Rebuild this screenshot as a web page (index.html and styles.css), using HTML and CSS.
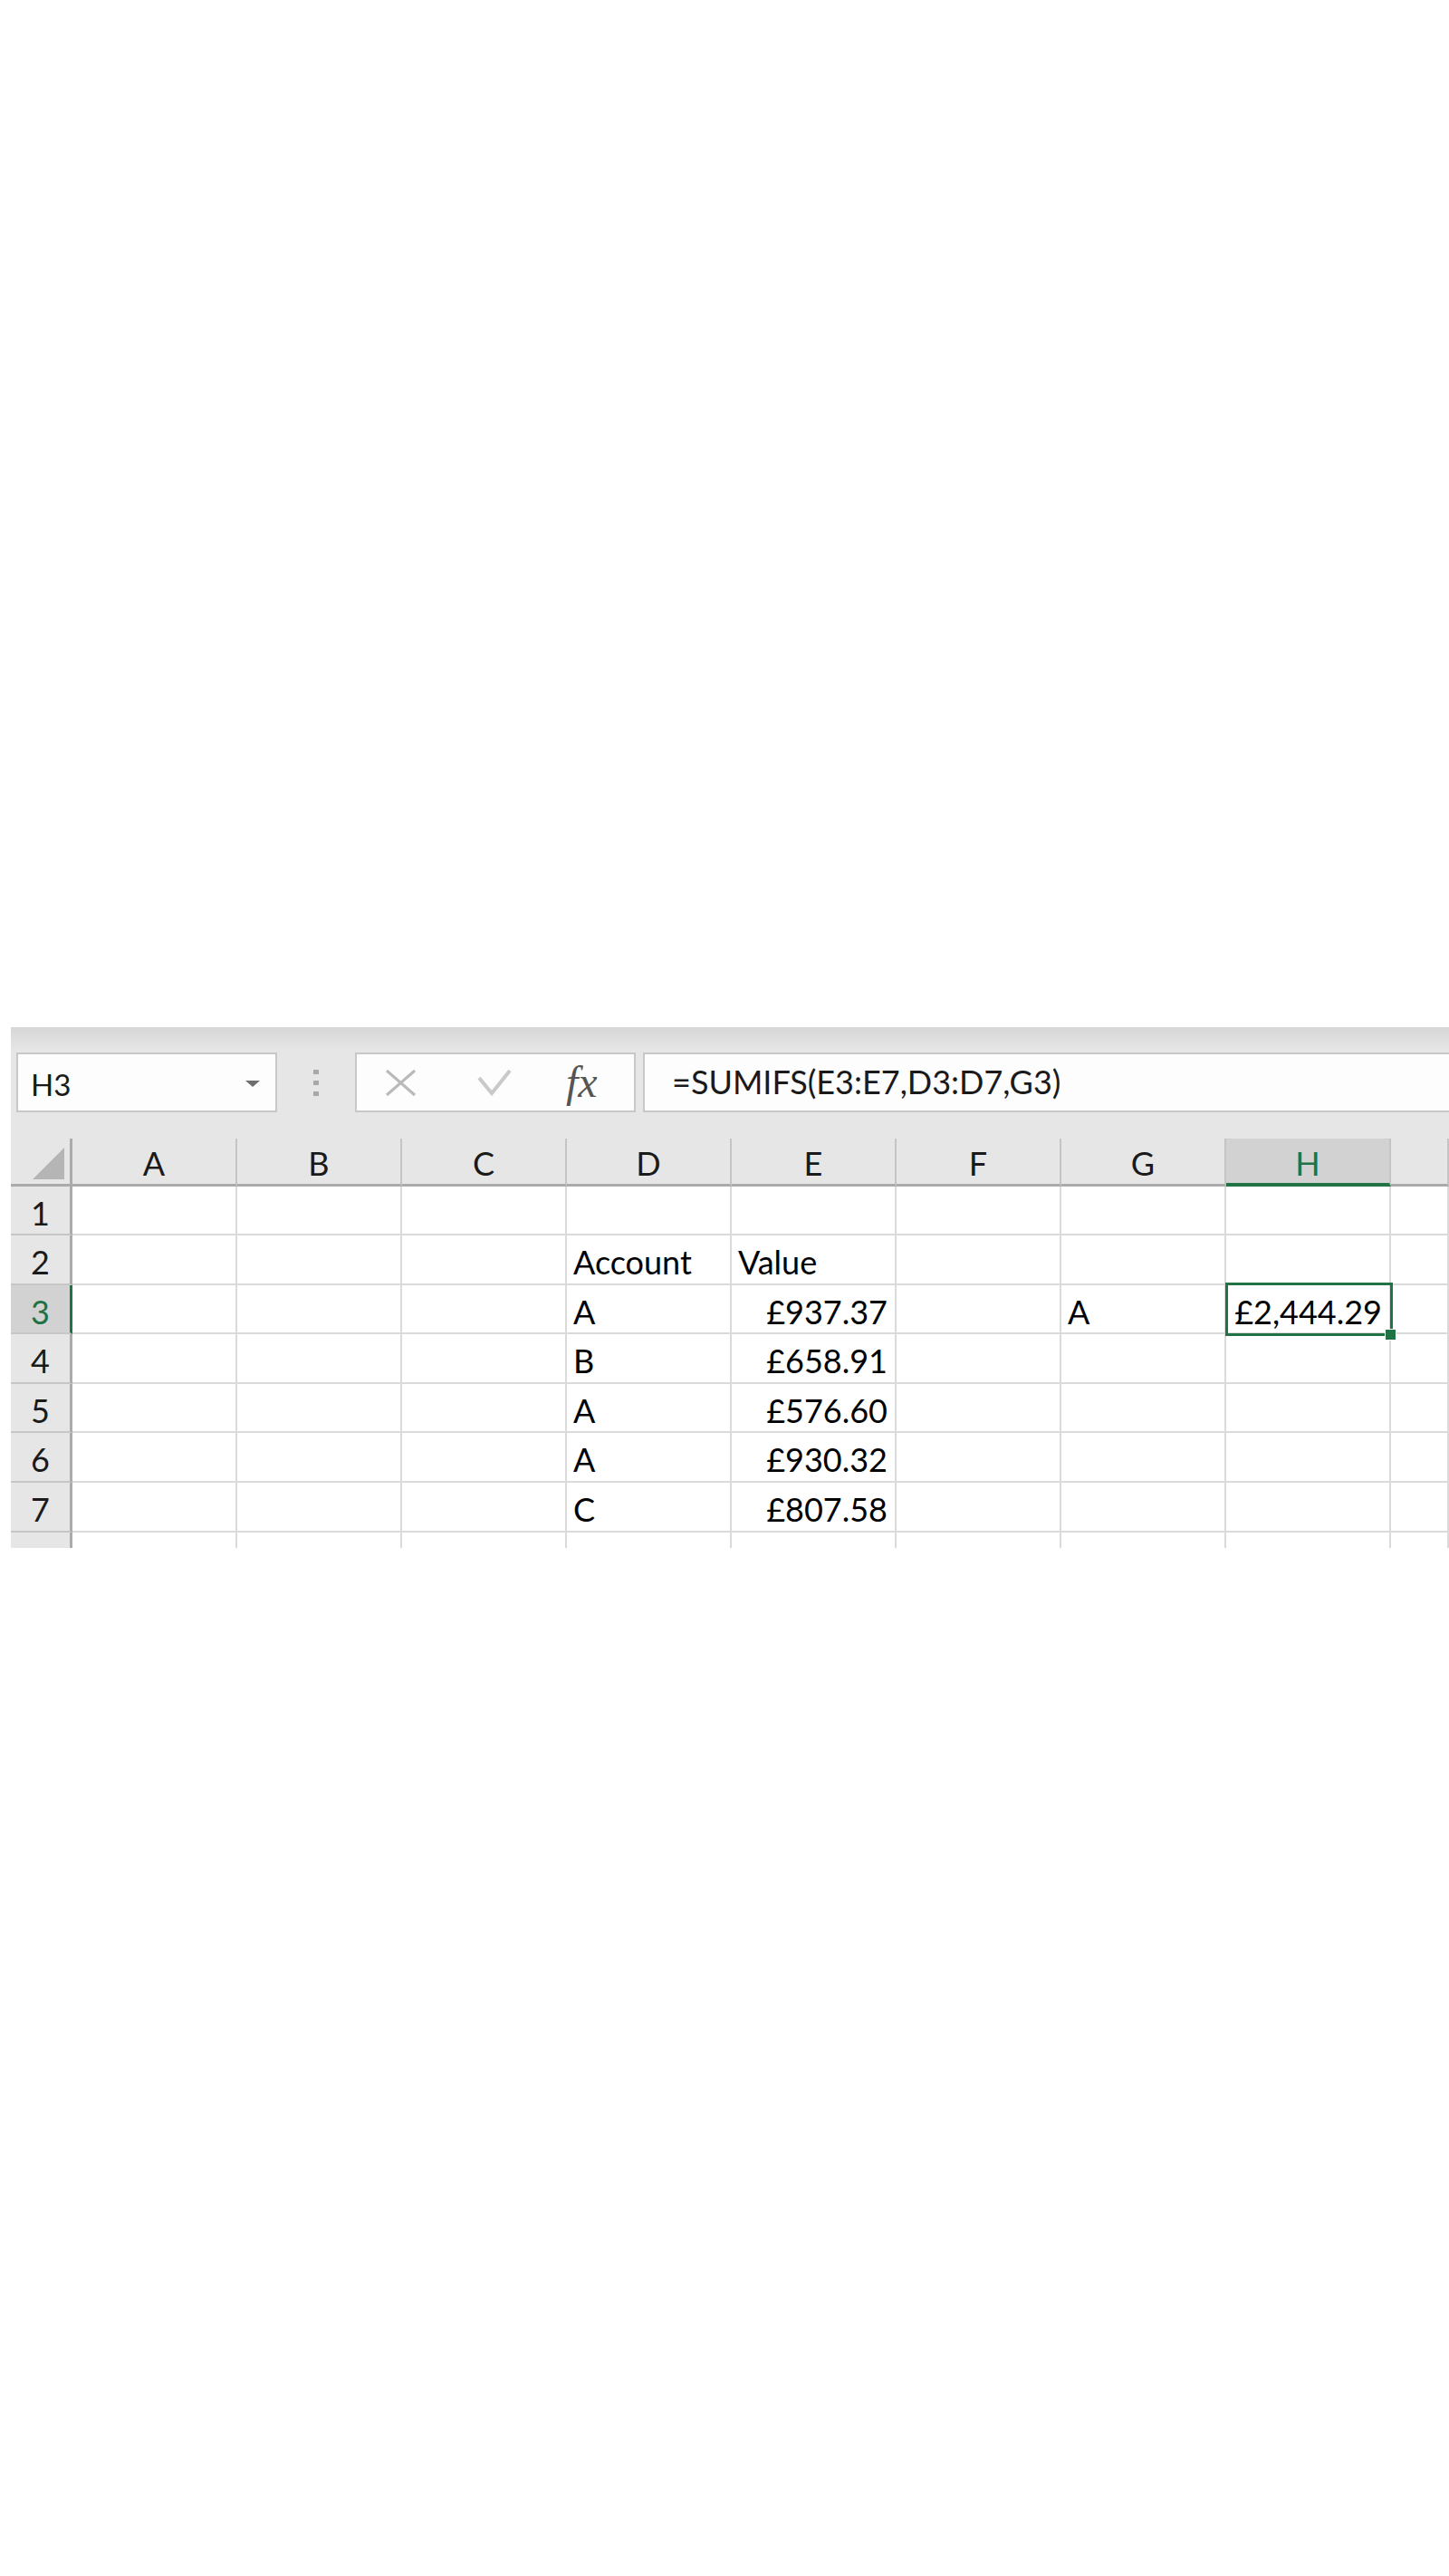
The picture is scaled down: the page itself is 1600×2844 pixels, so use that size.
FILE: index.html
```html
<!DOCTYPE html>
<html>
<head>
  <meta charset="utf-8">
  <title>SUMIFS example</title>
  <link rel="stylesheet" href="styles.css">
</head>
<body>
  <div class="sheet">
    <div class="formula-bar">
      <div class="name-box">
        <span class="name">H3</span>
        <span class="caret"></span>
      </div>
      <div class="grip"><span></span><span></span><span></span></div>
      <div class="fx-box">
        <svg class="icon-cancel" width="35" height="31" viewBox="0 0 35 31"><path d="M2 2 L33 29 M33 2 L2 29" stroke="#bababa" stroke-width="3" fill="none"/></svg>
        <svg class="icon-enter" width="38" height="30" viewBox="0 0 38 30"><path d="M2 10 L16 27 L36 2" stroke="#c9c9c9" stroke-width="4" fill="none"/></svg>
        <span class="fx">fx</span>
      </div>
      <div class="formula">=SUMIFS(E3:E7,D3:D7,G3)</div>
    </div>

    <div class="grid">
      <!-- column headers -->
      <div class="corner"><span class="select-all"></span></div>
      <div class="ch">A</div>
      <div class="ch">B</div>
      <div class="ch">C</div>
      <div class="ch">D</div>
      <div class="ch">E</div>
      <div class="ch">F</div>
      <div class="ch">G</div>
      <div class="ch sel">H</div>
      <div class="ch"></div>

      <!-- row 1 -->
      <div class="rh">1</div>
      <div class="cell"></div><div class="cell"></div><div class="cell"></div><div class="cell"></div>
      <div class="cell"></div><div class="cell"></div><div class="cell"></div><div class="cell"></div><div class="cell"></div>

      <!-- row 2 -->
      <div class="rh">2</div>
      <div class="cell"></div><div class="cell"></div><div class="cell"></div>
      <div class="cell">Account</div>
      <div class="cell">Value</div>
      <div class="cell"></div><div class="cell"></div><div class="cell"></div><div class="cell"></div>

      <!-- row 3 -->
      <div class="rh sel">3</div>
      <div class="cell"></div><div class="cell"></div><div class="cell"></div>
      <div class="cell">A</div>
      <div class="cell num">£937.37</div>
      <div class="cell"></div>
      <div class="cell">A</div>
      <div class="cell num active">£2,444.29<span class="sel-box"></span><span class="fill-handle"></span></div>
      <div class="cell"></div>

      <!-- row 4 -->
      <div class="rh">4</div>
      <div class="cell"></div><div class="cell"></div><div class="cell"></div>
      <div class="cell">B</div>
      <div class="cell num">£658.91</div>
      <div class="cell"></div><div class="cell"></div><div class="cell"></div><div class="cell"></div>

      <!-- row 5 -->
      <div class="rh">5</div>
      <div class="cell"></div><div class="cell"></div><div class="cell"></div>
      <div class="cell">A</div>
      <div class="cell num">£576.60</div>
      <div class="cell"></div><div class="cell"></div><div class="cell"></div><div class="cell"></div>

      <!-- row 6 -->
      <div class="rh">6</div>
      <div class="cell"></div><div class="cell"></div><div class="cell"></div>
      <div class="cell">A</div>
      <div class="cell num">£930.32</div>
      <div class="cell"></div><div class="cell"></div><div class="cell"></div><div class="cell"></div>

      <!-- row 7 -->
      <div class="rh">7</div>
      <div class="cell"></div><div class="cell"></div><div class="cell"></div>
      <div class="cell">C</div>
      <div class="cell num">£807.58</div>
      <div class="cell"></div><div class="cell"></div><div class="cell"></div><div class="cell"></div>

      <!-- row 8 (cut off) -->
      <div class="rh">8</div>
      <div class="cell"></div><div class="cell"></div><div class="cell"></div><div class="cell"></div>
      <div class="cell"></div><div class="cell"></div><div class="cell"></div><div class="cell"></div><div class="cell"></div>
    </div>
  </div>
</body>
</html>
```

FILE: styles.css
```css
body {
  margin: 0;
  background: #fff;
  font-family: Lato, "Open Sans", sans-serif;
  color: #000;
}

.sheet {
  margin: 1134px 0 0 12px;
  height: 575px;
  overflow: hidden;
  background: #e6e6e6;
}

/* formula bar */
.formula-bar {
  display: flex;
  align-items: center;
  height: 123px;
  box-sizing: border-box;
  padding: 28px 0 29px 6px;
  background: linear-gradient(#d7d7d7, #e6e6e6 26px);
}

.name-box {
  display: flex;
  align-items: center;
  box-sizing: border-box;
  width: 288px;
  height: 66px;
  padding: 3px 17px 0 14px;
  background: #fdfdfd;
  border: 2px solid #c8c8c8;
  margin-right: 40px;
}

.name {
  font-size: 33px;
  color: #1a1a1a;
}

.caret {
  margin-left: auto;
  width: 0;
  height: 0;
  border-left: 8px solid transparent;
  border-right: 8px solid transparent;
  border-top: 7px solid #6e6e6e;
}

.grip {
  display: flex;
  flex-direction: column;
  gap: 7px;
  margin-right: 40px;
}

.grip span {
  display: block;
  width: 6px;
  height: 5px;
  background: #a8a8a8;
}

.fx-box {
  display: flex;
  align-items: center;
  box-sizing: border-box;
  width: 310px;
  height: 66px;
  padding-left: 31px;
  background: #fdfdfd;
  border: 2px solid #c8c8c8;
  margin-right: 8px;
}

.icon-cancel {
  margin-right: 67px;
}

.icon-enter {
  margin-right: 60px;
}

.fx {
  font-family: "Liberation Serif", serif;
  font-style: italic;
  font-size: 48px;
  line-height: 48px;
  color: #555;
}

.formula {
  flex: 1;
  box-sizing: border-box;
  height: 66px;
  margin-right: -10px;
  padding: 8px 0 0 30px;
  font-size: 36px;
  line-height: 44px;
  color: #1a1a1a;
  background: #fdfdfd;
  border: 2px solid #c8c8c8;
}

/* grid */
.grid {
  display: grid;
  grid-template-columns: 68px repeat(8, 182px) 1fr;
  grid-template-rows: 53px 54px 55px 54px 55px 54px 55px 55px 55px;
  background: #fff;
  font-size: 36px;
  line-height: 40px;
}

.corner {
  display: flex;
  justify-content: flex-end;
  align-items: flex-end;
  padding: 0 6px 5px 0;
  background: #e6e6e6;
  border-right: 3px solid #ababab;
  border-bottom: 3px solid #ababab;
}

.select-all {
  width: 0;
  height: 0;
  border-left: 35px solid transparent;
  border-bottom: 35px solid #b5b5b5;
}

.ch {
  padding-top: 7px;
  text-align: center;
  color: #1a1a1a;
  background: #e6e6e6;
  border-right: 2px solid #c4c4c4;
  border-bottom: 3px solid #ababab;
}

.ch.sel {
  color: #217346;
  background: #d2d2d2;
  border-bottom: 4px solid #217346;
}

.rh {
  padding-top: 9px;
  text-align: center;
  color: #1a1a1a;
  background: #e6e6e6;
  border-right: 3px solid #ababab;
  border-bottom: 2px solid #c6c6c6;
}

.rh.sel {
  color: #217346;
  background: #d2d2d2;
  border-right-color: #217346;
}

.cell {
  padding: 9px 8px 0 7px;
  white-space: nowrap;
  border-right: 2px solid #dadada;
  border-bottom: 2px solid #dadada;
}

.cell.num {
  text-align: right;
}

.cell.active {
  position: relative;
}

.sel-box {
  position: absolute;
  left: -1px;
  top: -3px;
  right: -4px;
  bottom: -4px;
  border: 3px solid #217346;
}

.fill-handle {
  position: absolute;
  right: -8px;
  bottom: -9px;
  width: 13px;
  height: 13px;
  box-sizing: border-box;
  background: #217346;
  border: 1px solid #fff;
}
```
